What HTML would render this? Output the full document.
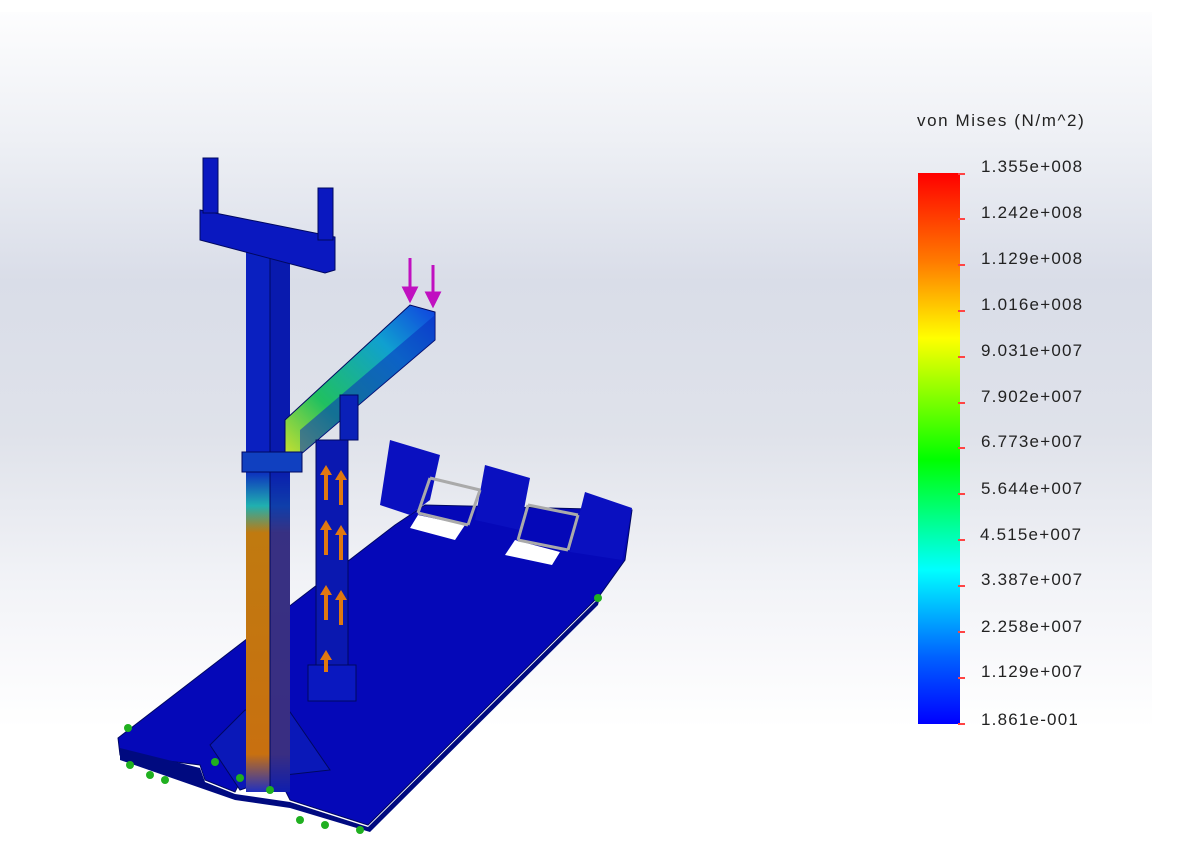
<!DOCTYPE html>
<html><head><style>
html,body{margin:0;padding:0;width:1196px;height:854px;overflow:hidden;background:#fff;}
.bg{position:absolute;left:0;top:12px;width:1152px;height:842px;background:linear-gradient(180deg,#fdfdfe 0%,#eef0f5 15%,#d9dde8 32%,#dfe2ea 50%,#f2f3f7 68%,#ffffff 85%);}
.leg{position:absolute;font-family:"Liberation Sans",sans-serif;font-size:17px;letter-spacing:1.2px;color:#222;}
.bar{position:absolute;left:918px;top:173px;width:42px;height:551px;background:linear-gradient(180deg,#ff0000 0%,#ff7a00 16%,#ffff00 30%,#00ff00 52%,#00ffff 72%,#0060ff 88%,#0000ff 100%);}
.tick{position:absolute;left:958px;width:7px;height:2px;background:#f44;}
</style></head><body>
<div class="bg"></div>
<svg width="1196" height="854" style="position:absolute;left:0;top:0">
<defs>
<linearGradient id="beam" x1="0" y1="1" x2="1" y2="0"><stop offset="0" stop-color="#c8e030"/><stop offset=".3" stop-color="#20c060"/><stop offset=".7" stop-color="#10a0d0"/><stop offset="1" stop-color="#1040e0"/></linearGradient>
<linearGradient id="col" x1="0" y1="0" x2="0" y2="1"><stop offset="0" stop-color="#0a20c0"/><stop offset=".4" stop-color="#0a20c0"/><stop offset=".47" stop-color="#20b0b0"/><stop offset=".52" stop-color="#c07a10"/><stop offset=".93" stop-color="#c87010"/><stop offset="1" stop-color="#2030c0"/></linearGradient>
</defs>
<polygon points="118,738 395,525 425,505 632,510 625,560 600,595 368,825 290,800 275,770 245,772 235,792 205,780 200,765 120,755" fill="#0508b8" stroke="#000860" stroke-width="1"/>
<polygon points="120,748 200,768 205,782 235,794 290,802 368,827 600,597 598,605 370,832 290,808 235,800 120,760" fill="#000a80"/>
<polygon points="390,440 440,455 430,500 410,515 380,505" fill="#0a10c0"/>
<polygon points="485,465 530,478 520,530 475,520" fill="#0a10c0"/>
<polygon points="585,492 632,508 622,560 570,552" fill="#0a10c0"/>
<polygon points="418,515 465,525 455,540 410,528" fill="#fff"/>
<polygon points="515,540 560,552 552,565 505,555" fill="#fff"/>
<g stroke="#aaa" stroke-width="3" fill="#bbb"><line x1="430" y1="478" x2="480" y2="490"/><line x1="418" y1="513" x2="468" y2="525"/><line x1="430" y1="478" x2="418" y2="513"/><line x1="480" y1="490" x2="468" y2="525"/>
<line x1="528" y1="505" x2="578" y2="515"/><line x1="518" y1="540" x2="568" y2="550"/><line x1="528" y1="505" x2="518" y2="540"/><line x1="578" y1="515" x2="568" y2="550"/></g>
<polygon points="210,745 245,710 290,712 330,770 285,775 240,790" fill="#0a18b8" stroke="#000860"/>
<rect x="246" y="252" width="44" height="540" fill="url(#col)"/>
<rect x="270" y="252" width="20" height="540" fill="#0a18a8" opacity=".75"/>
<line x1="270" y1="252" x2="270" y2="792" stroke="#000860"/>
<polygon points="200,210 335,237 335,270 325,273 200,240" fill="#0a18c0" stroke="#000860"/>
<rect x="203" y="158" width="15" height="55" fill="#0a18c0" stroke="#000860"/>
<rect x="318" y="188" width="15" height="52" fill="#0a18c0" stroke="#000860"/>
<polygon points="285,420 410,305 435,312 435,340 300,455 285,452" fill="url(#beam)" stroke="#000860"/>
<polygon points="300,430 435,315 435,340 300,455" fill="#0a30c0" opacity=".55"/>
<rect x="242" y="452" width="60" height="20" fill="#1040c0" stroke="#000860"/>
<rect x="340" y="395" width="18" height="45" fill="#0a20b8" stroke="#000860"/>
<rect x="316" y="440" width="32" height="230" fill="#0a18b0" stroke="#000860"/>
<rect x="308" y="665" width="48" height="36" fill="#0a18c0" stroke="#000860"/>
<g fill="#e07810"><polygon points="320,475 326,465 332,475 328,475 328,500 324,500 324,475"/><polygon points="335,480 341,470 347,480 343,480 343,505 339,505 339,480"/>
<polygon points="320,530 326,520 332,530 328,530 328,555 324,555 324,530"/><polygon points="335,535 341,525 347,535 343,535 343,560 339,560 339,535"/>
<polygon points="320,595 326,585 332,595 328,595 328,620 324,620 324,595"/><polygon points="335,600 341,590 347,600 343,600 343,625 339,625 339,600"/>
<polygon points="320,660 326,650 332,660 328,660 328,672 324,672 324,660"/></g>
<g stroke="#c010c0" stroke-width="3" fill="#c010c0"><line x1="410" y1="258" x2="410" y2="292"/><polygon points="404,288 416,288 410,300"/><line x1="433" y1="265" x2="433" y2="297"/><polygon points="427,293 439,293 433,305"/></g>
<g fill="#20b020"><circle cx="128" cy="728" r="4"/><circle cx="130" cy="765" r="4"/><circle cx="150" cy="775" r="4"/><circle cx="165" cy="780" r="4"/><circle cx="215" cy="762" r="4"/><circle cx="270" cy="790" r="4"/><circle cx="300" cy="820" r="4"/><circle cx="325" cy="825" r="4"/><circle cx="360" cy="830" r="4"/><circle cx="598" cy="598" r="4"/><circle cx="240" cy="778" r="4"/></g>
</svg>
<div class="leg" style="left:917px;top:111px;letter-spacing:1.6px;">von Mises (N/m^2)</div>
<div class="bar"></div>
<div class="leg" style="left:981px;top:157px;">1.355e+008</div>
<div class="leg" style="left:981px;top:203px;">1.242e+008</div>
<div class="leg" style="left:981px;top:249px;">1.129e+008</div>
<div class="leg" style="left:981px;top:295px;">1.016e+008</div>
<div class="leg" style="left:981px;top:341px;">9.031e+007</div>
<div class="leg" style="left:981px;top:387px;">7.902e+007</div>
<div class="leg" style="left:981px;top:432px;">6.773e+007</div>
<div class="leg" style="left:981px;top:479px;">5.644e+007</div>
<div class="leg" style="left:980px;top:525px;">4.515e+007</div>
<div class="leg" style="left:981px;top:570px;">3.387e+007</div>
<div class="leg" style="left:981px;top:617px;">2.258e+007</div>
<div class="leg" style="left:981px;top:662px;">1.129e+007</div>
<div class="leg" style="left:981px;top:710px;">1.861e-001</div>
<div class="tick" style="top:173px"></div><div class="tick" style="top:218px"></div><div class="tick" style="top:264px"></div><div class="tick" style="top:310px"></div><div class="tick" style="top:356px"></div><div class="tick" style="top:402px"></div><div class="tick" style="top:447px"></div><div class="tick" style="top:493px"></div><div class="tick" style="top:539px"></div><div class="tick" style="top:585px"></div><div class="tick" style="top:631px"></div><div class="tick" style="top:677px"></div><div class="tick" style="top:723px"></div>
</body></html>
